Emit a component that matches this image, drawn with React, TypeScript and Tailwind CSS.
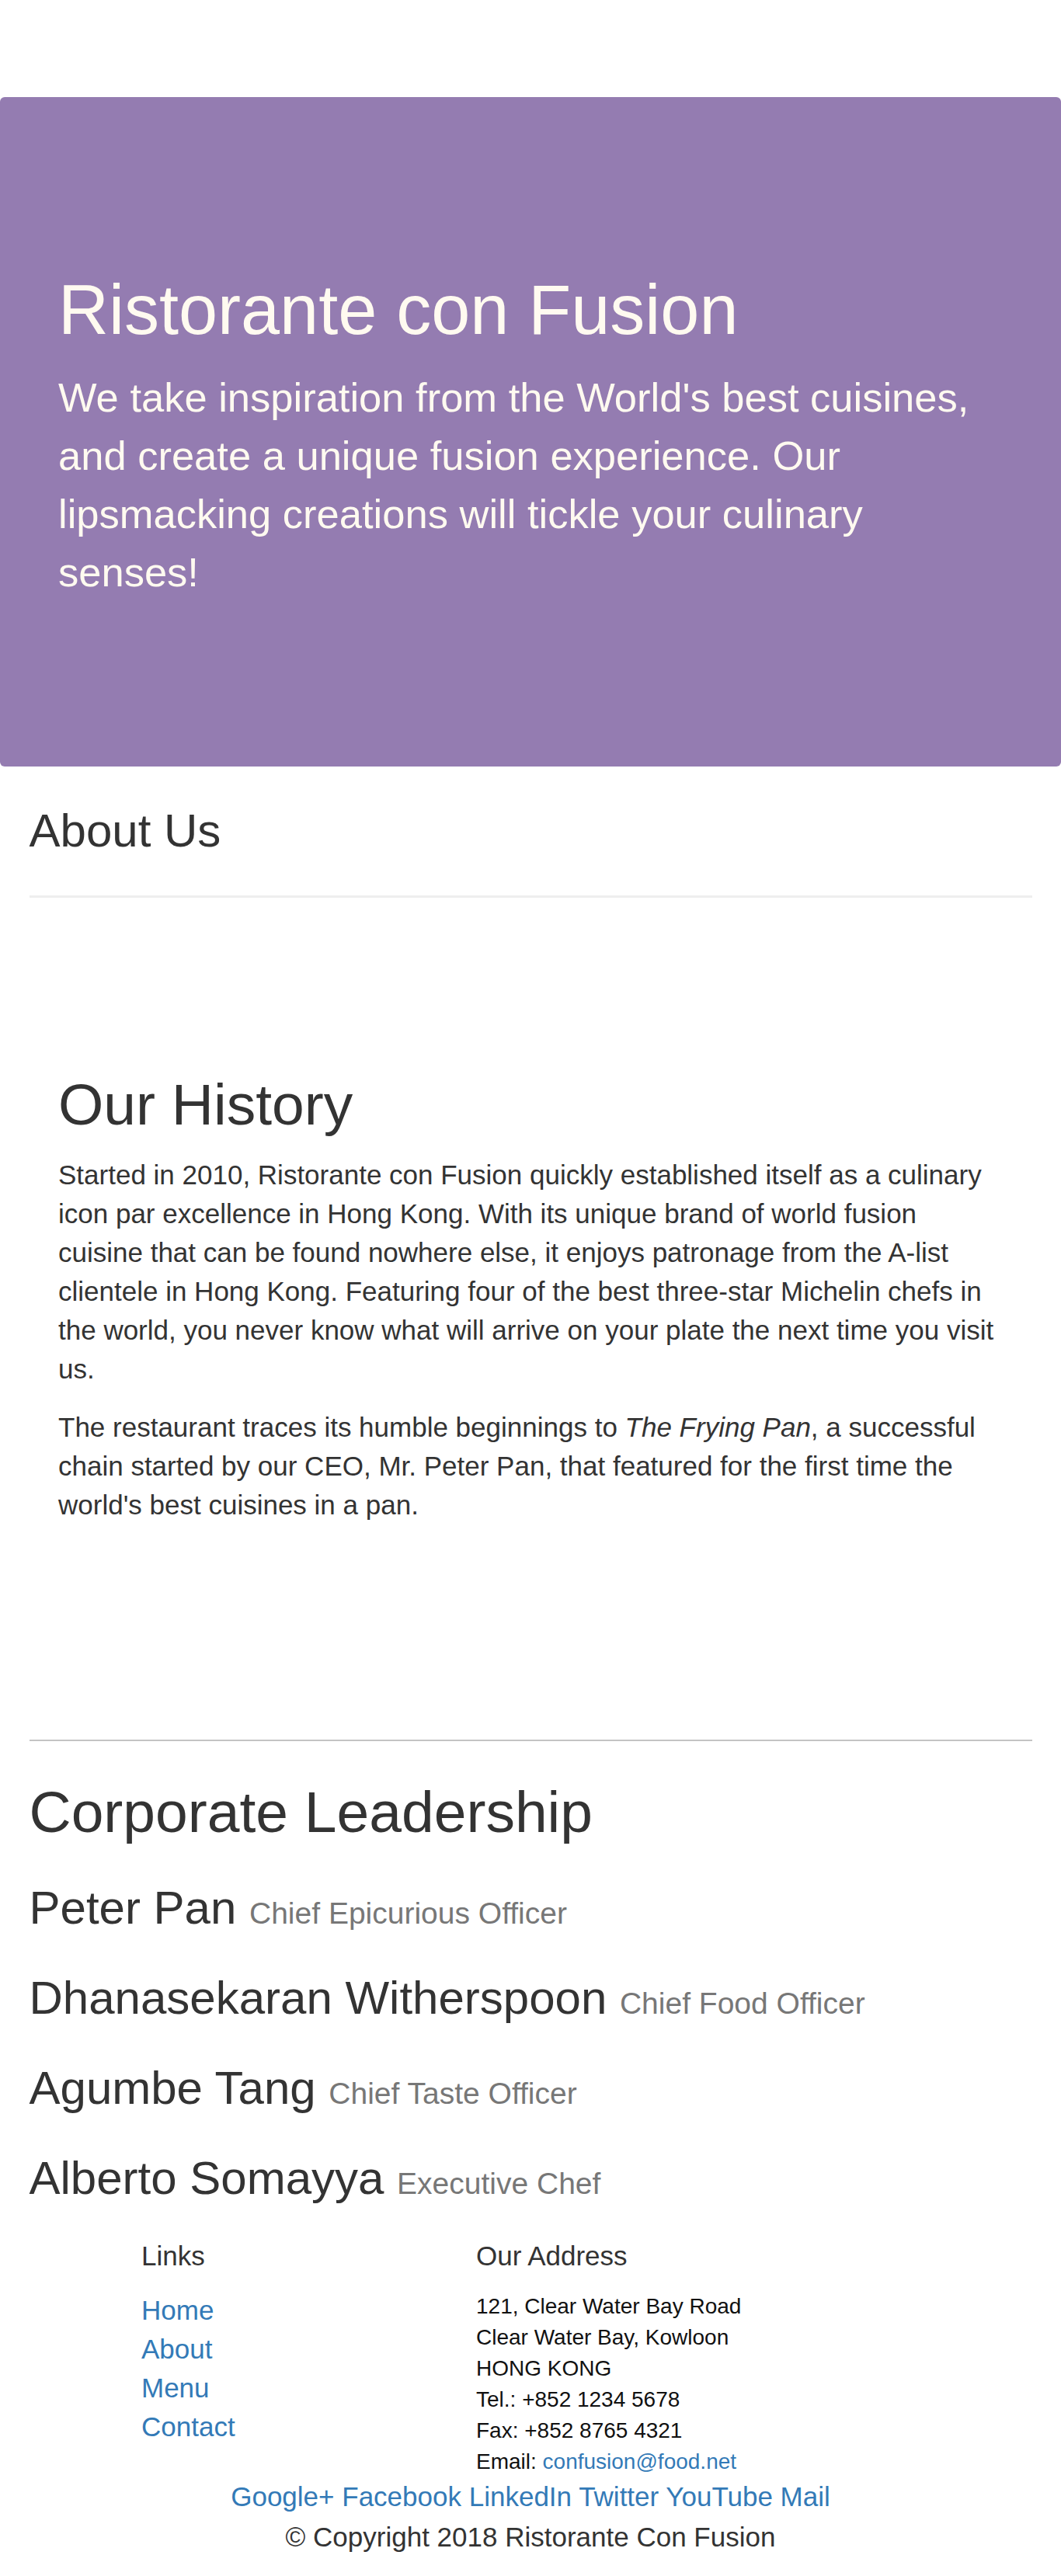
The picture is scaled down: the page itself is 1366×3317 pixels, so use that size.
const leaders = [
    { name: "Peter Pan", title: "Chief Epicurious Officer" },
    { name: "Dhanasekaran Witherspoon", title: "Chief Food Officer" },
    { name: "Agumbe Tang", title: "Chief Taste Officer" },
    { name: "Alberto Somayya", title: "Executive Chef" },
];

const socials = ["Google+", "Facebook", "LinkedIn", "Twitter", "YouTube", "Mail"];

const App = () => {
    return (
        <div className="min-h-[3317px] bg-white font-['Liberation_Sans',Arial,sans-serif] text-[35px] leading-[50px] text-[#333]">
            {/* navbar space */}
            <div className="h-[125px]" />

            <header className="rounded-md bg-[#947cb1] px-[75px] py-[175px] text-[#fffaf0]">
                <h1 className="mt-[50px] mb-[25px] text-[90px] leading-[99px]">
                    Ristorante con Fusion
                </h1>
                <p className="mb-[37.5px] text-[52.5px] leading-[75px]">
                    We take inspiration from the World's best cuisines, and
                    create a unique fusion experience. Our lipsmacking creations
                    will tickle your culinary senses!
                </p>
            </header>

            <main className="px-[37.5px]">
                <h3 className="mt-[50px] mb-[25px] text-[60px] leading-[66px]">
                    About Us
                </h3>
                <hr className="my-[50px] border-0 border-t-[3px] border-[#eeeeee]" />

                <section className="h-[1036px] border-b-2 border-[#c4c4c4] px-[37.5px] pt-[175px]">
                    <h2 className="mb-[25px] text-[75px] leading-[82.5px]">
                        Our History
                    </h2>
                    <p className="mb-[25px]">
                        Started in 2010, Ristorante con Fusion quickly
                        established itself as a culinary icon par excellence in
                        Hong Kong. With its unique brand of world fusion cuisine
                        that can be found nowhere else, it enjoys patronage from
                        the A-list clientele in Hong Kong. Featuring four of the
                        best three-star Michelin chefs in the world, you never
                        know what will arrive on your plate the next time you
                        visit us.
                    </p>
                    <p className="mb-[25px]">
                        The restaurant traces its humble beginnings to{" "}
                        <em>The Frying Pan</em>, a successful chain started by
                        our CEO, Mr. Peter Pan, that featured for the first time
                        the world's best cuisines in a pan.
                    </p>
                </section>

                <section>
                    <h2 className="mt-[50px] mb-[25px] text-[75px] leading-[82.5px]">
                        Corporate Leadership
                    </h2>
                    {leaders.map((l) => (
                        <h3
                            key={l.name}
                            className="mt-[50px] mb-[25px] text-[60px] leading-[66px]"
                        >
                            {l.name}{" "}
                            <small className="text-[39px] leading-none text-[#777]">
                                {l.title}
                            </small>
                        </h3>
                    ))}
                </section>
            </main>

            <footer className="pt-[23px]">
                <div className="flex">
                    <div className="ml-[182px] w-[431px]">
                        <h5 className="mb-[25px] text-[35px] leading-[38.5px]">
                            Links
                        </h5>
                        <ul className="mb-[25px]">
                            {["Home", "About", "Menu", "Contact"].map((item) => (
                                <li key={item}>
                                    <a href="#" className="text-[#337ab7]">
                                        {item}
                                    </a>
                                </li>
                            ))}
                        </ul>
                    </div>
                    <div>
                        <h5 className="mb-[25px] text-[35px] leading-[38.5px]">
                            Our Address
                        </h5>
                        <address className="text-[28px] leading-[40px] not-italic text-[#111]">
                            121, Clear Water Bay Road
                            <br />
                            Clear Water Bay, Kowloon
                            <br />
                            HONG KONG
                            <br />
                            Tel.: +852 1234 5678
                            <br />
                            Fax: +852 8765 4321
                            <br />
                            Email:{" "}
                            <a href="#" className="text-[#337ab7]">
                                confusion@food.net
                            </a>
                        </address>
                    </div>
                </div>
                <div className="text-center">
                    {socials.map((s, i) => (
                        <span key={s}>
                            <a href="#" className="text-[#337ab7]">
                                {s}
                            </a>
                            {i < socials.length - 1 ? " " : null}
                        </span>
                    ))}
                </div>
                <p className="mb-[25px] pt-[2px] text-center">
                    © Copyright 2018 Ristorante Con Fusion
                </p>
            </footer>
        </div>
    );
};

export default App;
